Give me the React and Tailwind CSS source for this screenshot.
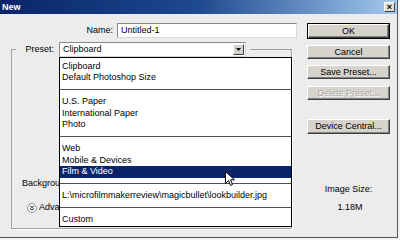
import React from "react";

const presetGroups = [
  ["Clipboard", "Default Photoshop Size"],
  ["U.S. Paper", "International Paper", "Photo"],
  ["Web", "Mobile & Devices", "Film & Video"],
  ["L:\\microfilmmakerreview\\magicbullet\\lookbuilder.jpg"],
  ["Custom"],
];

function DlgButton({ children, isDefault, disabled, className = "" }) {
  return (
    <div
      className={`${isDefault ? "border border-black" : ""} ${className}`}
    >
      <button
        type="button"
        className={`w-full h-full bg-[#d6d3cc] border border-t-white border-l-white border-b-[#404040] border-r-[#404040] shadow-[inset_-1px_-1px_0_#808080] text-[9px] leading-none ${
          disabled ? "text-[#a8a8a8] [text-shadow:1px_1px_0_#fff]" : "text-black"
        }`}
      >
        {children}
      </button>
    </div>
  );
}

function PresetList() {
  return (
    <div className="absolute left-[59px] top-[43px] w-[233px] bg-white border border-black pt-[2.5px]">
      {presetGroups.map((group, gi) => (
        <div key={gi}>
          {gi > 0 && (
            <div className="pt-[5.5px] pb-[6px]">
              <div className="h-px bg-[#505050]" />
            </div>
          )}
          {group.map((item) => {
            const selected = item === "Film & Video";
            return (
              <div
                key={item}
                className={`h-[11.5px] leading-[11.5px] pl-[2px] whitespace-nowrap ${
                  selected ? "bg-[#0a246a] text-white" : "text-black"
                }`}
              >
                {item}
              </div>
            );
          })}
        </div>
      ))}
    </div>
  );
}

function Cursor() {
  return (
    <svg
      className="absolute left-[225px] top-[157px]"
      width="11"
      height="16"
      viewBox="0 0 11 16"
    >
      <path
        d="M0.5 0.5 L0.5 12.5 L3.5 9.5 L5.5 14.5 L7.5 13.5 L5.5 8.8 L9.5 8.8 Z"
        fill="#fff"
        stroke="#000"
        strokeWidth="1"
        strokeLinejoin="miter"
      />
    </svg>
  );
}

export default function App() {
  return (
    <div className="w-[400px] h-[240px] bg-[#f3f3f3] overflow-hidden font-['Liberation_Sans',Arial,sans-serif] text-[9px] text-black">
      <div className="w-[398px] h-[238px] bg-[#ececec] border-r border-b border-[#555] flex flex-col">
        {/* title bar */}
        <div className="h-[14px] shrink-0 flex items-center justify-between pl-[2px] pr-[2px] bg-gradient-to-r from-[#0a246a] via-[#1e4a8e] to-[#a6caf0]">
          <span className="text-white font-bold text-[9px] leading-none">New</span>
          <div className="w-[11px] h-[10px] bg-[#e2e0da] border border-t-white border-l-white border-b-[#404040] border-r-[#404040] flex items-center justify-center text-[9px] font-bold leading-none">
            ×
          </div>
        </div>

        {/* body */}
        <div className="relative flex flex-1">
          <div className="w-[297px] pt-[9px]">
            <div className="flex items-center h-[15px]">
              <span className="w-[117px] text-right pr-[4px]">Name:</span>
              <div className="w-[180px] h-[15px] bg-white border border-[#8a8a8a] border-b-[#d8d8d8] border-r-[#d8d8d8] pl-[3px] leading-[13px]">
                Untitled-1
              </div>
            </div>

            <fieldset className="ml-[11px] mt-[4px] w-[281px] h-[187px] border border-[#a0a0a0] shadow-[1px_1px_0_#fff]">
              <legend className="ml-[4px] pr-[4px] flex items-center">
                <span className="w-[43px] text-right pr-[5px]">Preset:</span>
                <div className="w-[187px] h-[15px] bg-white border border-[#8a8a8a] border-b-[#d8d8d8] border-r-[#d8d8d8] flex items-center justify-between pl-[3px] pr-[1px]">
                  <span>Clipboard</span>
                  <div className="w-[11px] h-[11px] bg-[#d6d3cc] border border-t-white border-l-white border-b-[#404040] border-r-[#404040] flex items-center justify-center">
                    <svg width="5" height="3" viewBox="0 0 5 3">
                      <path d="M0 0 H5 L2.5 3 Z" fill="#000" />
                    </svg>
                  </div>
                </div>
              </legend>
              <div className="pt-[120px]">
                <div className="h-[12px] leading-[12px] pl-[10px] whitespace-nowrap">
                  Background Contents:
                </div>
                <div className="mt-[12px] h-[14px] flex items-center pl-[15px] gap-[2px]">
                  <svg width="10" height="10" viewBox="0 0 10 10">
                    <circle cx="5" cy="5" r="4.5" fill="#f4f4f4" stroke="#9a9a9a" />
                    <path d="M3 3 L5 4.6 L7 3 M3 5.4 L5 7 L7 5.4" fill="none" stroke="#222" strokeWidth="1" />
                  </svg>
                  <span>Advanced</span>
                </div>
              </div>
            </fieldset>
          </div>

          <div className="ml-[10px] w-[83px] pt-[9px] flex flex-col">
            <DlgButton isDefault className="h-[16px]">OK</DlgButton>
            <DlgButton className="mt-[6px] h-[14px]">Cancel</DlgButton>
            <DlgButton className="mt-[6px] h-[14px]">Save Preset...</DlgButton>
            <DlgButton disabled className="mt-[7px] h-[14px]">
              Delete Preset...
            </DlgButton>
            <DlgButton className="mt-[19px] h-[15px]">Device Central...</DlgButton>
            <div className="mt-[50px] text-center leading-[11px]">Image Size:</div>
            <div className="mt-[7px] text-center leading-[11px] pl-[3px]">1.18M</div>
          </div>

          <PresetList />
          <Cursor />
        </div>
      </div>
    </div>
  );
}
